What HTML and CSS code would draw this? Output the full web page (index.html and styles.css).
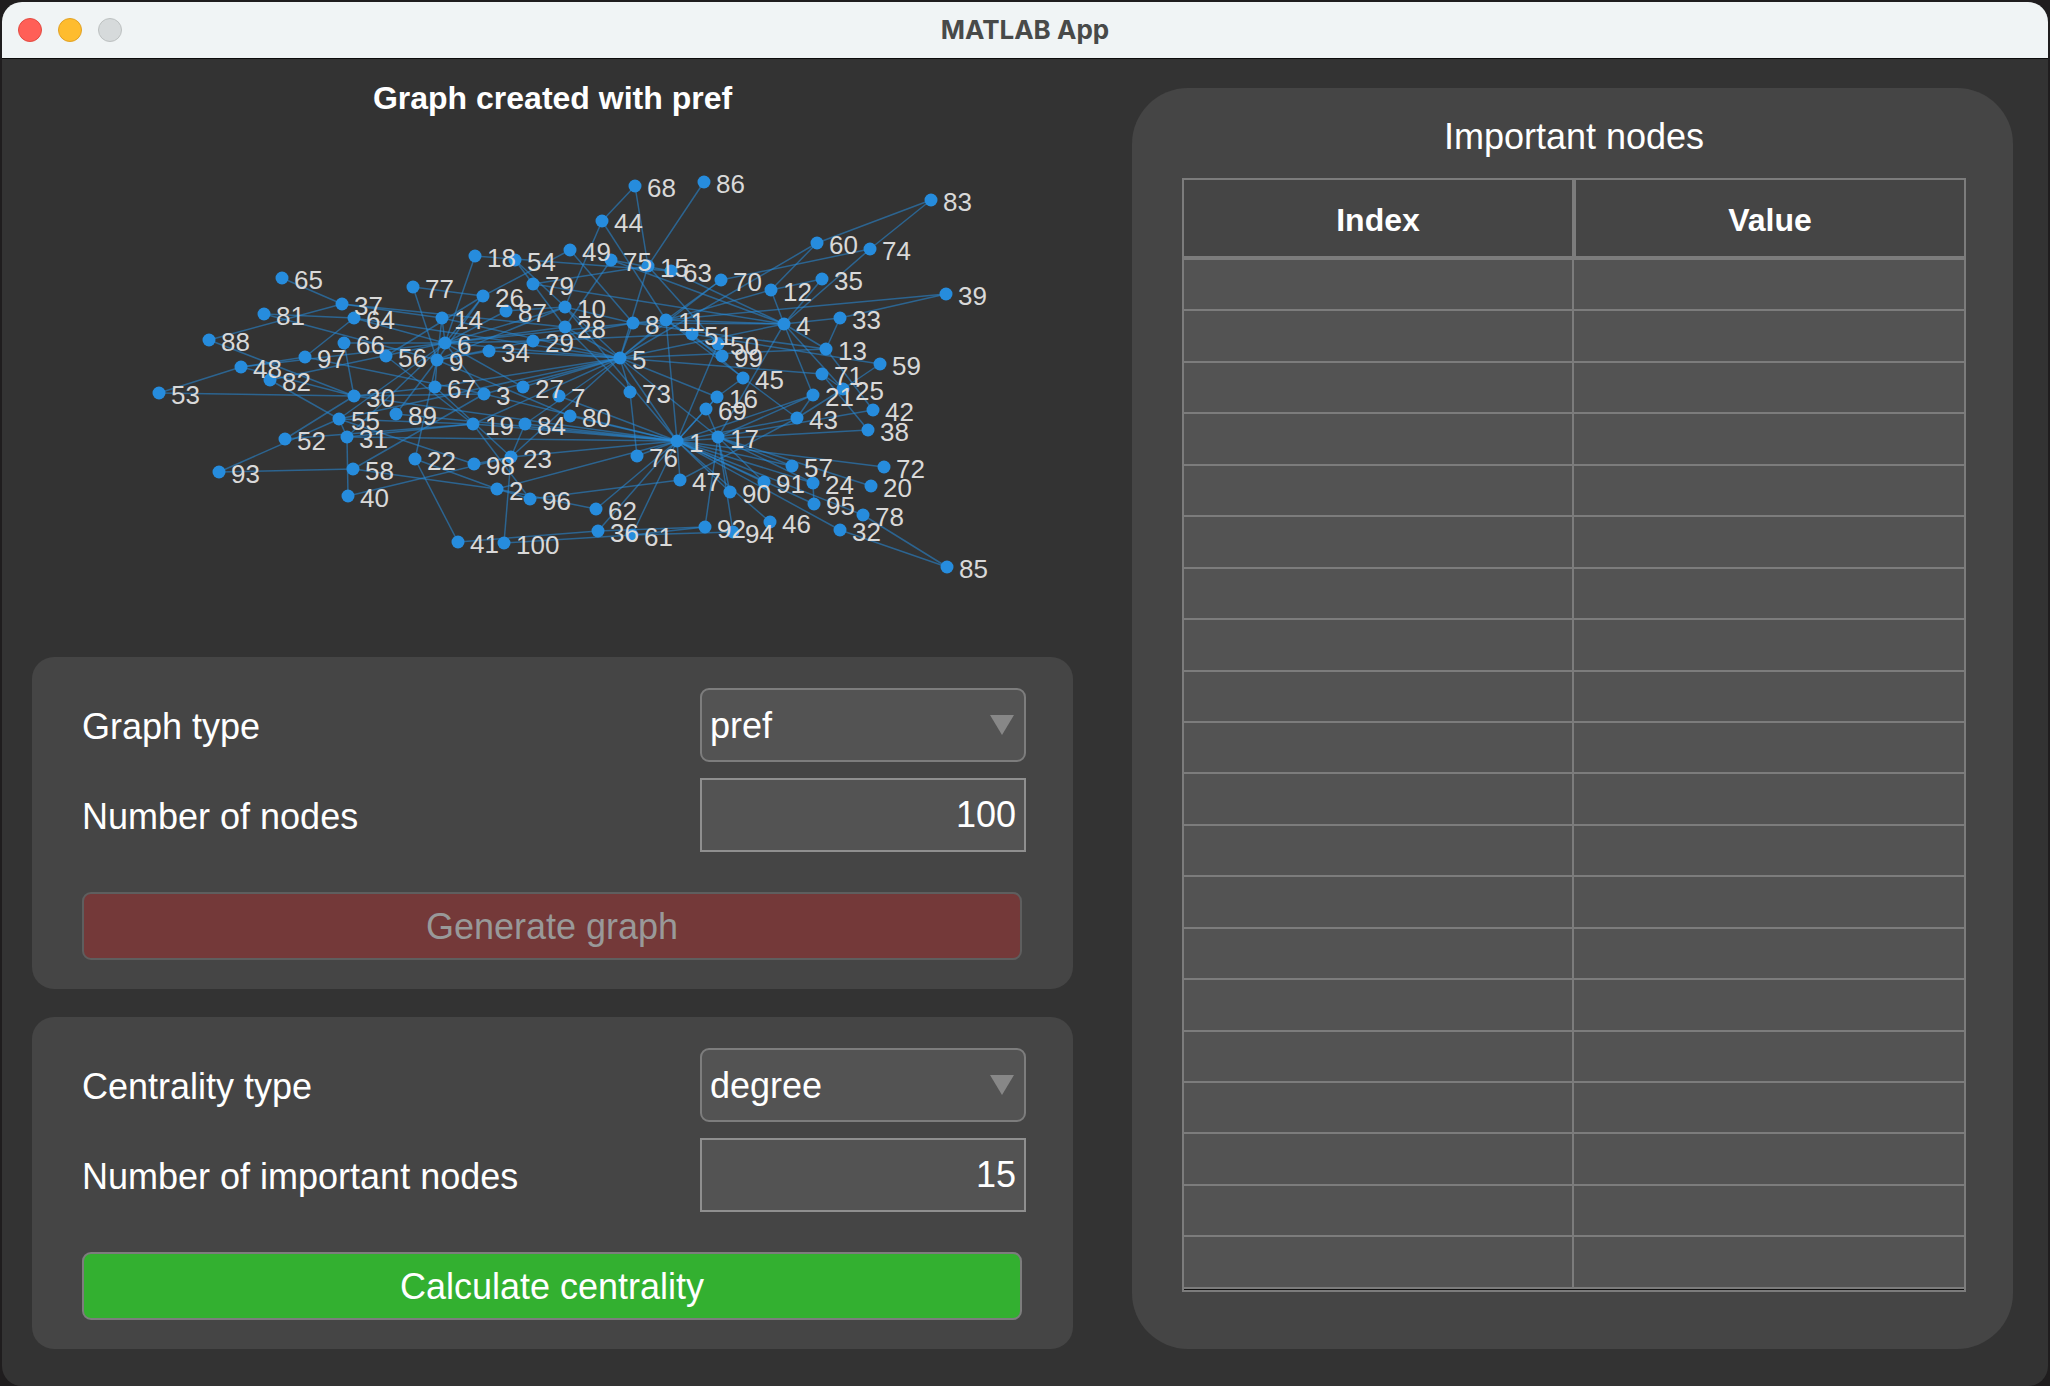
FILE: index.html
```html
<!DOCTYPE html>
<html lang="en">
<head>
<meta charset="utf-8">
<title>MATLAB App</title>
<link rel="stylesheet" href="styles.css">
</head>
<body>
<div class="window">
  <header class="titlebar">
    <div class="lights">
      <button class="light light-close" type="button" aria-label="Close"></button>
      <button class="light light-minimize" type="button" aria-label="Minimize"></button>
      <button class="light light-zoom" type="button" aria-label="Zoom" disabled></button>
    </div>
    <h1 class="window-title">MATLAB App</h1>
  </header>
  <main class="content">
    <div class="left">
      <section class="graph">
        <h2 class="graph-title">Graph created with pref</h2>
        <svg class="plot" id="plot" viewBox="31 119 1041 536" role="img" aria-label="Graph with 100 nodes"></svg>
      </section>
      <form class="panel">
        <div class="field">
          <label for="graph-type">Graph type</label>
          <div class="select-box"><select id="graph-type"><option>pref</option></select></div>
        </div>
        <div class="field">
          <label for="node-count">Number of nodes</label>
          <input id="node-count" type="text" inputmode="numeric" value="100">
        </div>
        <button class="action action-generate" type="button" disabled>Generate graph</button>
      </form>
      <form class="panel">
        <div class="field">
          <label for="centrality-type">Centrality type</label>
          <div class="select-box"><select id="centrality-type"><option>degree</option></select></div>
        </div>
        <div class="field">
          <label for="important-count">Number of important nodes</label>
          <input id="important-count" type="text" inputmode="numeric" value="15">
        </div>
        <button class="action action-calculate" type="button">Calculate centrality</button>
      </form>
    </div>
    <section class="results">
      <h2 class="results-title" id="results-title">Important nodes</h2>
      <div class="table-frame">
        <table aria-labelledby="results-title">
          <thead><tr><th scope="col">Index</th><th scope="col">Value</th></tr></thead>
          <tbody>
            <tr><td></td><td></td></tr>
            <tr><td></td><td></td></tr>
            <tr><td></td><td></td></tr>
            <tr><td></td><td></td></tr>
            <tr><td></td><td></td></tr>
            <tr><td></td><td></td></tr>
            <tr><td></td><td></td></tr>
            <tr><td></td><td></td></tr>
            <tr><td></td><td></td></tr>
            <tr><td></td><td></td></tr>
            <tr><td></td><td></td></tr>
            <tr><td></td><td></td></tr>
            <tr><td></td><td></td></tr>
            <tr><td></td><td></td></tr>
            <tr><td></td><td></td></tr>
            <tr><td></td><td></td></tr>
            <tr><td></td><td></td></tr>
            <tr><td></td><td></td></tr>
            <tr><td></td><td></td></tr>
            <tr><td></td><td></td></tr>
          </tbody>
        </table>
      </div>
    </section>
  </main>
</div>
<script src="graph.js"></script>
</body>
</html>
```
FILE: styles.css
```css
* {
  box-sizing: border-box;
}

body {
  margin: 0;
  background: #1f1d1e;
  color: #fff;
  font-family: "Liberation Sans", Arial, Helvetica, sans-serif;
  font-size: 36px;
}

h1,
h2 {
  margin: 0;
}

.window {
  display: flex;
  flex-direction: column;
  min-height: calc(100vh - 2px);
  margin: 2px 2px 0;
  border-radius: 20px;
  background: #333;
  overflow: hidden;
}

.titlebar {
  display: grid;
  grid-template-columns: 1fr auto 1fr;
  align-items: center;
  height: 57px;
  padding: 0 16px;
  border-bottom: 1px solid #0c0c0c;
  background: #f0f4f5;
}

.lights {
  display: flex;
  gap: 16px;
}

.light {
  width: 24px;
  height: 24px;
  padding: 0;
  border: 1px solid;
  border-radius: 50%;
}

.light-close {
  border-color: #e24b42;
  background: #ff5f57;
}

.light-minimize {
  border-color: #e1a125;
  background: #febc2e;
}

.light-zoom {
  border-color: #bcc0c0;
  background: #d6dadb;
}

.window-title {
  color: #484a49;
  font-family: Inter, sans-serif;
  font-size: 26px;
  font-weight: 700;
  line-height: 32px;
}

.content {
  flex: 1;
  display: grid;
  grid-template-columns: 1041fr 881fr;
  column-gap: 59px;
  padding: 29px 35px 37px 30px;
}

.left {
  display: flex;
  flex-direction: column;
  gap: 28px;
}

.graph {
  flex: 1;
  margin-bottom: -28px;
}

.graph-title {
  height: 32px;
  font-size: 32px;
  line-height: 20px;
  text-align: center;
}

.plot {
  display: block;
  width: 100%;
}

.edge {
  stroke: #268cdd;
  stroke-opacity: 0.55;
  stroke-width: 1.5;
}

.node {
  fill: #268cdd;
}

.node-label {
  fill: #d9d9d9;
  font-size: 26px;
}

.panel {
  display: flex;
  flex-direction: column;
  gap: 16px;
  padding: 31px 47px 29px 50px;
  border-radius: 22px;
  background: #454545;
}

.field {
  display: grid;
  grid-template-columns: 1fr 326px;
  align-items: center;
}

.field label {
  padding-top: 4px;
  line-height: 40px;
}

.field input,
.field select {
  display: block;
  width: 100%;
  height: 74px;
  margin: 0;
  padding: 0 8px;
  border: 2px solid #8f8f8f;
  border-radius: 0;
  background: #535353;
  color: #fff;
  font: inherit;
}

.field input {
  text-align: right;
}

.field select {
  appearance: none;
  border-color: #7d7d7d;
  border-radius: 9px;
}

.select-box {
  position: relative;
}

.select-box::after {
  content: "";
  position: absolute;
  top: 27px;
  right: 12px;
  width: 24px;
  height: 20px;
  background: #878787;
  clip-path: polygon(0 0, 100% 0, 50% 100%);
  pointer-events: none;
}

.action {
  height: 68px;
  margin: 24px 4px 0 0;
  padding: 2px 0 0;
  border: 2px solid #7d7d7d;
  border-radius: 9px;
  color: #fff;
  font: inherit;
}

.action-generate {
  border-color: #5e5e5e;
  background: #743939;
  color: #999;
}

.action-calculate {
  background: #33b030;
}

.results {
  display: flex;
  flex-direction: column;
  padding: 28px 47px 57px 50px;
  border-radius: 56px;
  background: #454545;
}

.results-title {
  height: 62px;
  font-size: 36px;
  font-weight: 400;
  line-height: 42px;
  text-align: center;
}

.table-frame {
  flex: 1;
  display: flex;
  padding-bottom: 1px;
  border: 2px solid #7c7c7c;
  background: #111;
}

.table-frame table {
  width: 100%;
  table-layout: fixed;
  border-spacing: 0;
}

.table-frame th {
  height: 80px;
  padding: 4px 0 0;
  border-bottom: 4px solid #7c7c7c;
  background: #454545;
  font-size: 32px;
}

.table-frame th + th {
  border-left: 2px solid #7c7c7c;
}

.table-frame th:first-child,
.table-frame td:first-child {
  border-right: 2px solid #7c7c7c;
}

.table-frame td {
  padding: 0;
  border-bottom: 2px solid #7c7c7c;
  background: #535353;
}
```
FILE: graph.js
```js
// Node number -> [x, y] in plot coordinates.
const nodes = {
  1: [676, 440], 2: [496, 488], 3: [483, 393], 4: [783, 323], 5: [619, 357],
  6: [444, 342], 7: [558, 395], 8: [632, 322], 9: [436, 359], 10: [564, 306],
  11: [665, 319], 12: [770, 289], 13: [825, 348], 14: [441, 317], 15: [647, 265],
  16: [716, 396], 17: [717, 436], 18: [474, 255], 19: [472, 423], 20: [870, 485],
  21: [812, 394], 22: [414, 458], 23: [510, 456], 24: [812, 482], 25: [842, 388],
  26: [482, 295], 27: [522, 386], 28: [564, 326], 29: [532, 340], 30: [353, 395],
  31: [346, 436], 32: [839, 529], 33: [839, 317], 34: [488, 350], 35: [821, 278],
  36: [597, 530], 37: [341, 303], 38: [867, 429], 39: [945, 293], 40: [347, 495],
  41: [457, 541], 42: [872, 409], 43: [796, 417], 44: [601, 220], 45: [742, 377],
  46: [769, 521], 47: [679, 479], 48: [240, 366], 49: [569, 249], 50: [717, 343],
  51: [691, 333], 52: [284, 438], 53: [158, 392], 54: [514, 259], 55: [338, 418],
  56: [385, 355], 57: [791, 465], 58: [352, 468], 59: [879, 363], 60: [816, 242],
  61: [631, 534], 62: [595, 508], 63: [670, 270], 64: [353, 317], 65: [281, 277],
  66: [343, 342], 67: [434, 386], 68: [634, 185], 69: [705, 408], 70: [720, 279],
  71: [821, 373], 72: [883, 466], 73: [629, 391], 74: [869, 248], 75: [610, 259],
  76: [636, 455], 77: [412, 286], 78: [862, 514], 79: [532, 283], 80: [569, 415],
  81: [263, 313], 82: [269, 379], 83: [930, 199], 84: [524, 423], 85: [946, 566],
  86: [703, 181], 87: [505, 310], 88: [208, 339], 89: [395, 413], 90: [729, 491],
  91: [763, 481], 92: [704, 526], 93: [218, 471], 94: [732, 531], 95: [813, 503],
  96: [529, 498], 97: [304, 356], 98: [473, 463], 99: [721, 355], 100: [503, 542]
};

const edges = `
65-37 37-28 37-14 88-37 88-30 81-64 81-9 64-6 64-5 97-64 97-48 97-3 66-6 66-30
48-6 48-30 82-6 82-55 53-48 53-30 52-30 52-19 93-55 93-58 58-2 58-3 55-31 55-6
98-55 40-31 40-23 31-19 31-1 31-6 89-9 89-1 30-3 30-1 56-26 56-19 77-26 77-9
22-9 22-41 22-2 98-23 18-6 18-63 54-79 54-5 79-28 79-15 79-4 49-26 49-8 44-10
44-11 68-44 68-15 86-15 75-28 75-4 15-5 63-4 63-75 70-5 70-11 10-9 10-6 10-1
10-8 26-6 26-9 14-6 14-9 14-5 87-10 87-6 28-6 28-5 29-6 29-9 29-8 34-9 34-5 8-6
8-4 8-5 8-13 11-1 11-5 11-4 51-29 51-45 51-59 50-1 50-15 99-11 13-5 5-6 5-3 5-1
5-4 5-17 5-16 5-71 5-19 5-23 5-55 67-9 67-23 67-5 27-5 27-6 73-5 73-28 73-76
76-1 3-1 3-6 7-1 80-1 80-9 84-1 84-23 84-5 19-1 23-1 2-1 19-96 96-47 96-2 62-1
62-2 36-1 61-1 41-36 100-23 100-61 61-92 36-92 61-94 47-1 47-43 69-1 69-17
16-69 16-1 45-16 43-11 21-4 21-1 21-43 21-17 43-25 25-4 59-25 71-25 13-42 42-17
38-71 38-1 17-4 33-13 33-39 33-4 39-8 72-1 20-17 24-17 24-95 57-1 57-17 91-1
91-17 90-1 90-17 92-17 94-17 46-1 95-1 32-1 78-1 85-32 85-78 12-4 12-60 12-11
35-12 35-4 74-4 74-70 83-60 83-74 60-5 4-13 43-1 24-1 55-19 30-67
`.trim().split(/\s+/).map(e => e.split("-"));

const plot = document.getElementById("plot");

function draw(tag, className, attributes, text) {
  const element = document.createElementNS("http://www.w3.org/2000/svg", tag);
  element.setAttribute("class", className);
  for (const [name, value] of Object.entries(attributes)) {
    element.setAttribute(name, value);
  }
  if (text) element.textContent = text;
  plot.append(element);
}

for (const [from, to] of edges) {
  const [x1, y1] = nodes[from];
  const [x2, y2] = nodes[to];
  draw("line", "edge", { x1, y1, x2, y2 });
}
for (const [cx, cy] of Object.values(nodes)) {
  draw("circle", "node", { cx, cy, r: 6.5 });
}
for (const [name, [x, y]] of Object.entries(nodes)) {
  draw("text", "node-label", { x: x + 12, y: y + 11 }, name);
}
```
